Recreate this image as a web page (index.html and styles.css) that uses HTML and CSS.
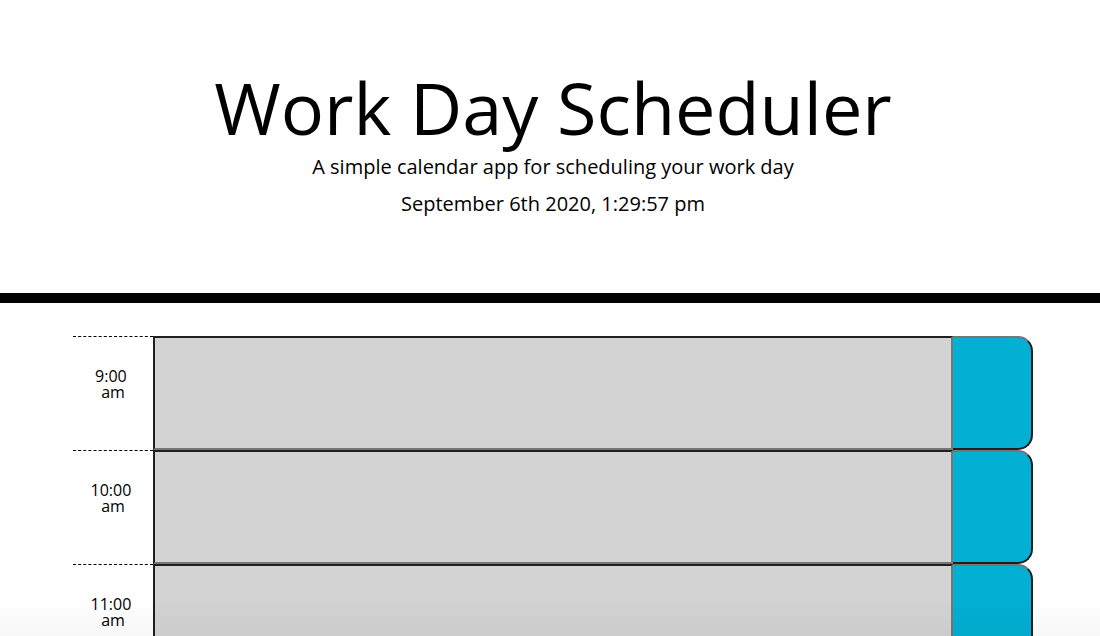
FILE: index.html
```html
<!DOCTYPE html>
<html lang="en">
<head>
<meta charset="utf-8">
<title>Work Day Scheduler</title>
<link rel="stylesheet" href="styles.css">
</head>
<body>
<header class="jumbotron">
  <h1 class="display">Work Day Scheduler</h1>
  <p class="lead">A simple calendar app for scheduling your work day</p>
  <p class="current-day">September 6th 2020, 1:29:57 pm</p>
</header>
<main class="container">
  <div class="time-block">
    <div class="hour">9:00 am</div>
    <textarea class="description past"></textarea>
    <button class="save-btn" aria-label="save"></button>
  </div>
  <div class="time-block">
    <div class="hour">10:00 am</div>
    <textarea class="description past"></textarea>
    <button class="save-btn" aria-label="save"></button>
  </div>
  <div class="time-block">
    <div class="hour">11:00 am</div>
    <textarea class="description past"></textarea>
    <button class="save-btn" aria-label="save"></button>
  </div>
  <div class="time-block">
    <div class="hour">12:00 pm</div>
    <textarea class="description past"></textarea>
    <button class="save-btn" aria-label="save"></button>
  </div>
</main>
<div class="bottom-fade"></div>
</body>
</html>
```

FILE: styles.css
```css
html, body {
  margin: 0;
  padding: 0;
  background: #ffffff;
}

body {
  font-family: "Open Sans", "Liberation Sans", sans-serif;
  font-size: 16px;
  line-height: 1;
  color: #000000;
}

.jumbotron {
  text-align: center;
  padding: 64px 0 74px 6px;
  border-bottom: 10px solid #000000;
  margin-bottom: 32px;
}

.display {
  font-size: 72px;
  font-weight: 400;
  line-height: 1.2;
  margin: 0;
}

.lead {
  font-size: 20px;
  font-weight: 400;
  line-height: 1.5;
  margin: 2px 0 0 0;
}

.current-day {
  font-size: 20px;
  line-height: 1.5;
  margin: 7px 0 0 0;
}

.container {
  width: 960px;
  margin-left: 73px;
}

.time-block {
  display: flex;
  height: 114px;
  border-top: 1px solid #ffffff;
  margin-top: -1px;
}

.time-block:first-child {
  margin-top: 0;
}

.hour {
  width: 80px;
  flex: none;
  box-sizing: border-box;
  border-top: 1px dashed #000000;
  padding: 31px 12px 0;
  text-align: center;
  white-space: break-spaces;
  font-size: 16px;
  line-height: 16px;
}

.description {
  width: 800px;
  flex: none;
  box-sizing: border-box;
  height: 114px;
  margin: 0;
  padding: 10px;
  resize: none;
  border-style: solid;
  border-width: 2px;
  border-color: #1f1f1f #767676 #767676 #1f1f1f;
  font-family: inherit;
  font-size: 16px;
}

.past {
  background-color: #d3d3d3;
}

.save-btn {
  width: 80px;
  flex: none;
  box-sizing: border-box;
  height: 114px;
  margin: 0;
  padding: 0;
  background-color: #03afd3;
  border-style: solid;
  border-width: 2px 2px 2px 0;
  border-color: #767676 #1f1f1f #1f1f1f #767676;
  border-radius: 0 15px 15px 0;
}

.bottom-fade {
  position: fixed;
  left: 0;
  right: 0;
  bottom: 0;
  height: 36px;
  background: linear-gradient(to bottom, rgba(0, 0, 0, 0), rgba(0, 0, 0, 0.03));
  pointer-events: none;
}
```
